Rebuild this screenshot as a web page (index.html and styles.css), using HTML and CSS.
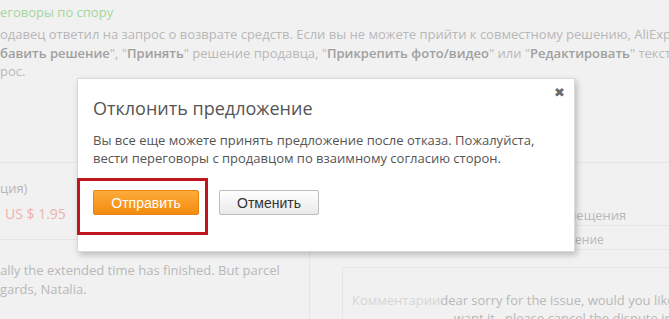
FILE: index.html
```html
<!DOCTYPE html>
<html lang="ru">
<head>
    <meta charset="UTF-8">
    <meta name="viewport" content="width=device-width, initial-scale=1.0">
    <title>Отклонить предложение</title>
    <link rel="stylesheet" href="styles.css">
</head>
<body>
    <div class="page">
        <div class="intro">
            <h2 class="intro-title">еговоры по спору</h2>
            <p class="intro-text">
                одавец ответил на запрос о возврате средств. Если вы не можете прийти к совместному решению, AliExpress<br>
                <b>бавить решение</b>", "<b>Принять</b>" решение продавца, "<b>Прикрепить фото/видео</b>" или "<b>Редактировать</b>" текст предложения<br>
                рос.
            </p>
        </div>

        <div class="content">
            <div class="left-col">
                <div class="summary">
                    <div class="summary-label">ция)</div>
                    <div class="summary-price">US $ 1.95</div>
                </div>
                <div class="message">
                    ally the extended time has finished. But parcel<br>
                    gards, Natalia.
                </div>
            </div>
            <div class="right-col">
                <div class="info-row info-title">Способ возмещения</div>
                <div class="info-row info-sub">Возмещение</div>
                <div class="comment">
                    <span class="comment-label">Комментарии</span>
                    <span class="comment-text">dear sorry for the issue, would you like<br>&nbsp;&nbsp;&nbsp;&nbsp;want it , please cancel the dispute in a</span>
                </div>
            </div>
        </div>
    </div>

    <div class="modal">
        <button class="modal-close" type="button">&#10006;</button>
        <h3 class="modal-title">Отклонить предложение</h3>
        <p class="modal-text">Вы все еще можете принять предложение после отказа. Пожалуйста,<br>вести переговоры с продавцом по взаимному согласию сторон.</p>
        <div class="modal-actions">
            <button class="btn btn-primary" type="button">Отправить</button>
            <button class="btn btn-default" type="button">Отменить</button>
        </div>
        <div class="highlight"></div>
    </div>
</body>
</html>
```

FILE: styles.css
```css
body {
    margin: 0;
    background: #f1f1f1;
    font-family: "Open Sans", "Liberation Sans", sans-serif;
    color: #b8b8b8;
    overflow: hidden;
    width: 669px;
    height: 319px;
}
.page {
    position: relative;
    white-space: nowrap;
    height: 319px;
    overflow: hidden;
}
.intro-title {
    margin: 0;
    padding-top: 3px;
    font-size: 13px;
    font-weight: normal;
    line-height: 18px;
    color: #a6d69c;
}
.intro-text {
    margin: 4px 0 0;
    font-size: 13px;
    line-height: 18.5px;
}
.intro-text b {
    color: #a0a0a0;
    font-weight: 600;
}
.content {
    display: grid;
    grid-template-columns: 310px 1fr;
    margin-top: 81px;
}
.left-col {
    border-right: 1px solid #e4e4e4;
}
.summary {
    border-top: 1px solid #e6e6e6;
    border-bottom: 1px solid #e6e6e6;
    height: 78px;
    padding-top: 16px;
    box-sizing: border-box;
    font-size: 13px;
}
.summary-label {
    line-height: 18px;
}
.summary-price {
    margin-top: 7px;
    margin-left: 5px;
    font-size: 14px;
    color: #eeb1ac;
}
.message {
    padding-top: 21px;
    font-size: 13px;
    line-height: 19px;
}
.right-col {
    margin-left: 32px;
}
.info-row {
    border-top: 1px solid #e6e6e6;
    font-size: 13px;
    box-sizing: border-box;
}
.info-title {
    height: 63px;
    padding: 43px 0 0 154px;
    line-height: 18px;
}
.info-sub {
    height: 25px;
    padding: 3px 0 0 186px;
    font-size: 12px;
    line-height: 22px;
    border-bottom: 1px solid #e6e6e6;
}
.comment {
    border-top: 1px solid #e6e6e6;
    border-left: 1px solid #e6e6e6;
    margin-top: 17px;
    padding: 23px 0 0 9px;
    font-size: 13px;
    line-height: 18px;
    display: flex;
    color: #b8b8b8;
}
.comment-label {
    color: #d6d6d6;
}

.modal {
    position: absolute;
    left: 77px;
    top: 78px;
    width: 498px;
    height: 174px;
    box-sizing: border-box;
    padding: 16px 15px;
    background: #fff;
    border: 1px solid #d9d9d9;
    box-shadow: 2px 3px 6px rgba(0, 0, 0, 0.22);
    font-family: "Open Sans", sans-serif;
}
.modal-close {
    position: absolute;
    right: 9px;
    top: 6px;
    border: 0;
    background: none;
    padding: 0;
    font-size: 13px;
    color: #6a6a6a;
    cursor: pointer;
}
.modal-title {
    margin: 0;
    font-size: 18px;
    font-weight: normal;
    line-height: 26px;
    color: #555;
}
.modal-text {
    margin: 10px 0 0;
    font-size: 13px;
    line-height: 18px;
    color: #555;
}
.modal-actions {
    display: flex;
    gap: 20px;
    margin-top: 23px;
}
.btn {
    height: 25px;
    border-radius: 2px;
    font-family: "Liberation Sans", Arial, sans-serif;
    font-size: 14px;
    padding: 0;
    cursor: pointer;
}
.btn-primary {
    width: 106px;
    color: #fff;
    background: linear-gradient(#fdaa3a, #f48c0f);
    border: 1px solid #e58412;
}
.btn-default {
    width: 100px;
    color: #333;
    background: linear-gradient(#ffffff, #e9e9e9);
    border: 1px solid #bdbdbd;
}
.highlight {
    position: absolute;
    left: -1px;
    top: 99px;
    width: 131px;
    height: 57px;
    box-sizing: border-box;
    border: 3px solid #c3151d;
}
```
